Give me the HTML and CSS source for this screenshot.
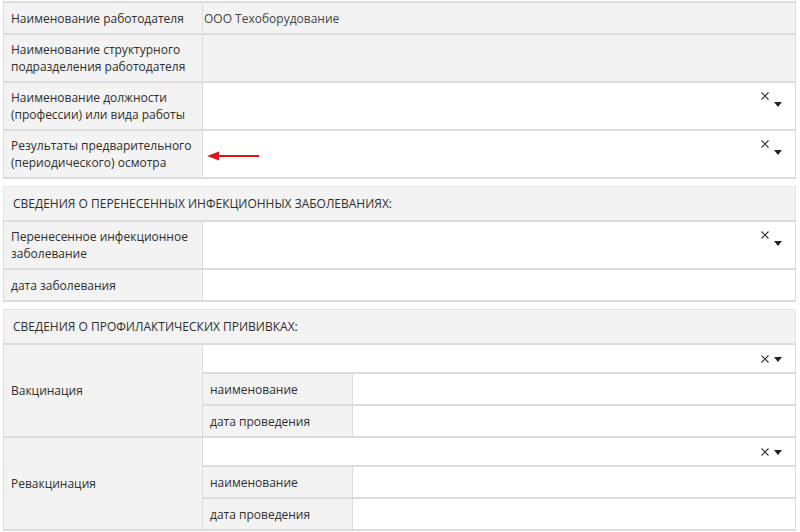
FILE: index.html
```html
<!DOCTYPE html>
<html lang="ru">
<head>
<meta charset="utf-8">
<title>Форма</title>
<link rel="stylesheet" href="styles.css">
</head>
<body>
<div class="form">
  <table class="grid">
    <colgroup><col class="c-label"><col></colgroup>
    <tr class="first">
      <td class="label">Наименование работодателя</td>
      <td class="value ro"><span class="ro-text">ООО Техоборудование</span></td>
    </tr>
    <tr class="tall">
      <td class="label">Наименование структурного подразделения работодателя</td>
      <td class="value ro"></td>
    </tr>
    <tr class="tall">
      <td class="label">Наименование должности (профессии) или вида работы</td>
      <td class="value sel">
        <div class="sel-box">
          <span class="clear"><svg width="8" height="8" viewBox="0 0 8 8"><path d="M0.5 0.5L7.5 7.5M7.5 0.5L0.5 7.5" stroke="#333" stroke-width="1.1"/></svg></span>
          <span class="caret low"></span>
        </div>
      </td>
    </tr>
    <tr class="tall">
      <td class="label">Результаты предварительного (периодического) осмотра</td>
      <td class="value sel">
        <div class="sel-box">
          <svg class="red-arrow" width="54" height="10" viewBox="0 0 54 10"><path d="M12 5H53" stroke="#d9171b" stroke-width="2"/><path d="M1 5L13 0.5V9.5Z" fill="#d9171b"/></svg>
          <span class="spacer"></span>
          <span class="clear"><svg width="8" height="8" viewBox="0 0 8 8"><path d="M0.5 0.5L7.5 7.5M7.5 0.5L0.5 7.5" stroke="#333" stroke-width="1.1"/></svg></span>
          <span class="caret low"></span>
        </div>
      </td>
    </tr>
  </table>

  <div class="section-head">Сведения о перенесенных инфекционных заболеваниях:</div>
  <table class="grid">
    <colgroup><col class="c-label"><col></colgroup>
    <tr class="tall">
      <td class="label">Перенесенное инфекционное заболевание</td>
      <td class="value sel">
        <div class="sel-box">
          <span class="clear"><svg width="8" height="8" viewBox="0 0 8 8"><path d="M0.5 0.5L7.5 7.5M7.5 0.5L0.5 7.5" stroke="#333" stroke-width="1.1"/></svg></span>
          <span class="caret low"></span>
        </div>
      </td>
    </tr>
    <tr class="first">
      <td class="label">дата заболевания</td>
      <td class="value"></td>
    </tr>
  </table>

  <div class="section-head">Сведения о профилактических прививках:</div>
  <table class="grid vac">
    <colgroup><col class="c-label"><col class="c-sub"><col></colgroup>
    <tr class="sel-row">
      <td class="label" rowspan="3">Вакцинация</td>
      <td class="value sel" colspan="2">
        <div class="sel-box flat">
          <span class="clear"><svg width="8" height="8" viewBox="0 0 8 8"><path d="M0.5 0.5L7.5 7.5M7.5 0.5L0.5 7.5" stroke="#333" stroke-width="1.1"/></svg></span>
          <span class="caret"></span>
        </div>
      </td>
    </tr>
    <tr class="sub-row">
      <td class="label sub">наименование</td>
      <td class="value"></td>
    </tr>
    <tr class="sub-row">
      <td class="label sub">дата проведения</td>
      <td class="value"></td>
    </tr>
    <tr class="sel-row">
      <td class="label" rowspan="3">Ревакцинация</td>
      <td class="value sel" colspan="2">
        <div class="sel-box flat">
          <span class="clear"><svg width="8" height="8" viewBox="0 0 8 8"><path d="M0.5 0.5L7.5 7.5M7.5 0.5L0.5 7.5" stroke="#333" stroke-width="1.1"/></svg></span>
          <span class="caret"></span>
        </div>
      </td>
    </tr>
    <tr class="sub-row">
      <td class="label sub">наименование</td>
      <td class="value"></td>
    </tr>
    <tr class="sub-row">
      <td class="label sub">дата проведения</td>
      <td class="value"></td>
    </tr>
  </table>
</div>
</body>
</html>
```

FILE: styles.css
```css
html, body {
  margin: 0;
  padding: 0;
  background: #ffffff;
}

body {
  font-family: "Open Sans", "Noto Sans", sans-serif;
  font-size: 12px;
  color: #2e2e2e;
}

.form {
  width: 793px;
  margin: 1px 0 0 3px;
}

.grid {
  width: 100%;
  border-collapse: collapse;
  table-layout: fixed;
}

.c-label { width: 199px; }
.c-sub { width: 150px; }

.grid td {
  border: 1px solid #dcdcdc;
  border-top-width: 2px;
  border-bottom-width: 2px;
  line-height: 17px;
  vertical-align: middle;
}

.label {
  background: #f3f3f3;
  padding: 6px 8px 6px 7px;
}

.first .label {
  padding-top: 7px;
}

.sub-row .label {
  padding-top: 7px;
  padding-bottom: 6px;
}

.value {
  background: #ffffff;
  padding: 6px 0;
}

.value.ro {
  background: #f3f3f3;
  padding-left: 1px;
  color: #444444;
}

.value.sel {
  padding: 0;
  vertical-align: top;
}

.sel-box {
  display: flex;
  align-items: flex-start;
  justify-content: flex-end;
  padding: 9px 13px 0 3px;
}

.sel-box.flat {
  align-items: center;
  padding-top: 10px;
  padding-bottom: 9px;
}

.spacer {
  flex: 1;
}

.red-arrow {
  display: block;
  margin-top: 11px;
}

.clear {
  display: block;
  width: 8px;
  height: 8px;
  margin-right: 5px;
}

.clear svg {
  display: block;
}

.caret {
  display: block;
  width: 0;
  height: 0;
  border-left: 4px solid transparent;
  border-right: 4px solid transparent;
  border-top: 5px solid #222222;
}

.caret.low {
  margin-top: 10px;
}

.section-head {
  margin-top: 7px;
  background: #f3f3f3;
  border: 1px solid #e6e6e6;
  border-bottom: none;
  padding: 8px 9px;
  line-height: 17px;
  text-transform: uppercase;
}
```
